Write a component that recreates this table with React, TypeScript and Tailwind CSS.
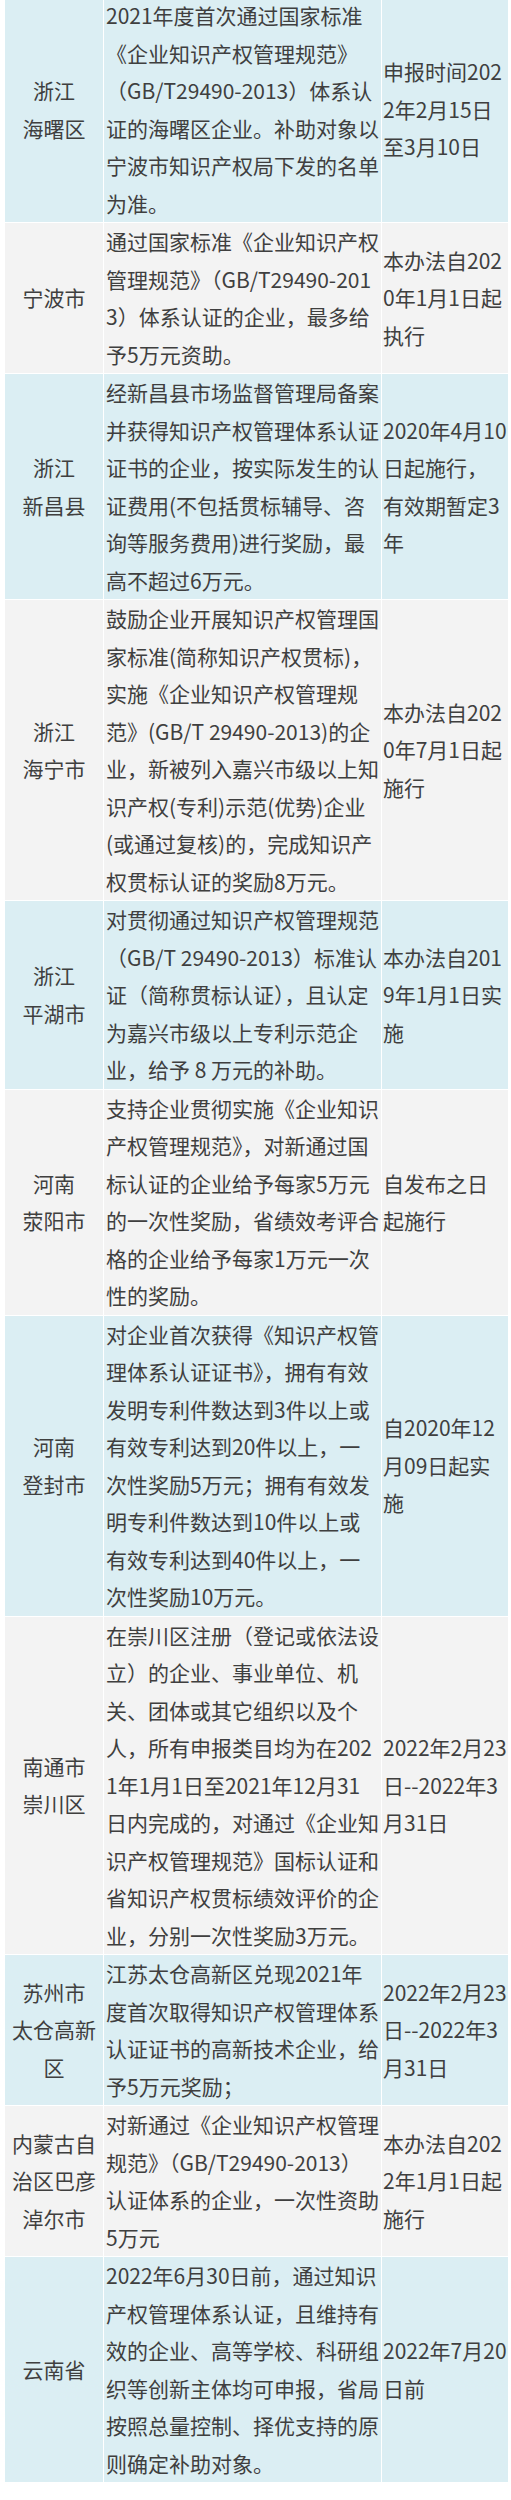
import React from 'react';

type Row = {
  region: string[];
  content: string[];
  time: string[];
};

const ROWS: Row[] = [
  {
    region: ['浙江', '海曙区'],
    content: [
      '2021年度首次通过国家标准',
      '《企业知识产权管理规范》',
      '（GB/T29490-2013）体系认',
      '证的海曙区企业。补助对象以',
      '宁波市知识产权局下发的名单',
      '为准。',
    ],
    time: ['申报时间202', '2年2月15日', '至3月10日'],
  },
  {
    region: ['宁波市'],
    content: [
      '通过国家标准《企业知识产权',
      '管理规范》（GB/T29490-201',
      '3）体系认证的企业，最多给',
      '予5万元资助。',
    ],
    time: ['本办法自202', '0年1月1日起', '执行'],
  },
  {
    region: ['浙江', '新昌县'],
    content: [
      '经新昌县市场监督管理局备案',
      '并获得知识产权管理体系认证',
      '证书的企业，按实际发生的认',
      '证费用(不包括贯标辅导、咨',
      '询等服务费用)进行奖励，最',
      '高不超过6万元。',
    ],
    time: ['2020年4月10', '日起施行，', '有效期暂定3', '年'],
  },
  {
    region: ['浙江', '海宁市'],
    content: [
      '鼓励企业开展知识产权管理国',
      '家标准(简称知识产权贯标)，',
      '实施《企业知识产权管理规',
      '范》(GB/T 29490-2013)的企',
      '业，新被列入嘉兴市级以上知',
      '识产权(专利)示范(优势)企业',
      '(或通过复核)的，完成知识产',
      '权贯标认证的奖励8万元。',
    ],
    time: ['本办法自202', '0年7月1日起', '施行'],
  },
  {
    region: ['浙江', '平湖市'],
    content: [
      '对贯彻通过知识产权管理规范',
      '（GB/T 29490-2013）标准认',
      '证（简称贯标认证），且认定',
      '为嘉兴市级以上专利示范企',
      '业，给予 8 万元的补助。',
    ],
    time: ['本办法自201', '9年1月1日实', '施'],
  },
  {
    region: ['河南', '荥阳市'],
    content: [
      '支持企业贯彻实施《企业知识',
      '产权管理规范》，对新通过国',
      '标认证的企业给予每家5万元',
      '的一次性奖励，省绩效考评合',
      '格的企业给予每家1万元一次',
      '性的奖励。',
    ],
    time: ['自发布之日', '起施行'],
  },
  {
    region: ['河南', '登封市'],
    content: [
      '对企业首次获得《知识产权管',
      '理体系认证证书》，拥有有效',
      '发明专利件数达到3件以上或',
      '有效专利达到20件以上，一',
      '次性奖励5万元；拥有有效发',
      '明专利件数达到10件以上或',
      '有效专利达到40件以上，一',
      '次性奖励10万元。',
    ],
    time: ['自2020年12', '月09日起实', '施'],
  },
  {
    region: ['南通市', '崇川区'],
    content: [
      '在崇川区注册（登记或依法设',
      '立）的企业、事业单位、机',
      '关、团体或其它组织以及个',
      '人，所有申报类目均为在202',
      '1年1月1日至2021年12月31',
      '日内完成的，对通过《企业知',
      '识产权管理规范》国标认证和',
      '省知识产权贯标绩效评价的企',
      '业，分别一次性奖励3万元。',
    ],
    time: ['2022年2月23', '日--2022年3', '月31日'],
  },
  {
    region: ['苏州市', '太仓高新', '区'],
    content: [
      '江苏太仓高新区兑现2021年',
      '度首次取得知识产权管理体系',
      '认证证书的高新技术企业，给',
      '予5万元奖励；',
    ],
    time: ['2022年2月23', '日--2022年3', '月31日'],
  },
  {
    region: ['内蒙古自', '治区巴彦', '淖尔市'],
    content: [
      '对新通过《企业知识产权管理',
      '规范》（GB/T29490-2013）',
      '认证体系的企业，一次性资助',
      '5万元',
    ],
    time: ['本办法自202', '2年1月1日起', '施行'],
  },
  {
    region: ['云南省'],
    content: [
      '2022年6月30日前，通过知识',
      '产权管理体系认证，且维持有',
      '效的企业、高等学校、科研组',
      '织等创新主体均可申报，省局',
      '按照总量控制、择优支持的原',
      '则确定补助对象。',
    ],
    time: ['2022年7月20', '日前'],
  },
];

const Lines = ({ lines }: { lines: string[] }) => (
  <>
    {lines.map((line, i) => (
      <div key={i} className="whitespace-nowrap">
        {line}
      </div>
    ))}
  </>
);

export default function App() {
  return (
    <div
      className="min-h-[2500px] bg-white text-[#3f3f3f] text-[21px] leading-[37.5px]"
      style={{ fontFamily: '"Noto Sans CJK SC", "Noto Sans", sans-serif' }}
    >
      <div className="-mt-[3px] ml-[5px] grid w-[503px] grid-cols-[98px_277px_126px] gap-px bg-white">
        {ROWS.map((row, idx) => {
          const bg = idx % 2 === 0 ? 'bg-[#dbeef3]' : 'bg-[#f3f3f3]';
          return (
            <React.Fragment key={idx}>
              <div className={`${bg} flex flex-col items-center justify-center text-center`}>
                <Lines lines={row.region} />
              </div>
              <div className={`${bg} pl-[2px]`}>
                <Lines lines={row.content} />
              </div>
              <div className={`${bg} flex flex-col justify-center pl-[1px]`}>
                <Lines lines={row.time} />
              </div>
            </React.Fragment>
          );
        })}
      </div>
    </div>
  );
}
